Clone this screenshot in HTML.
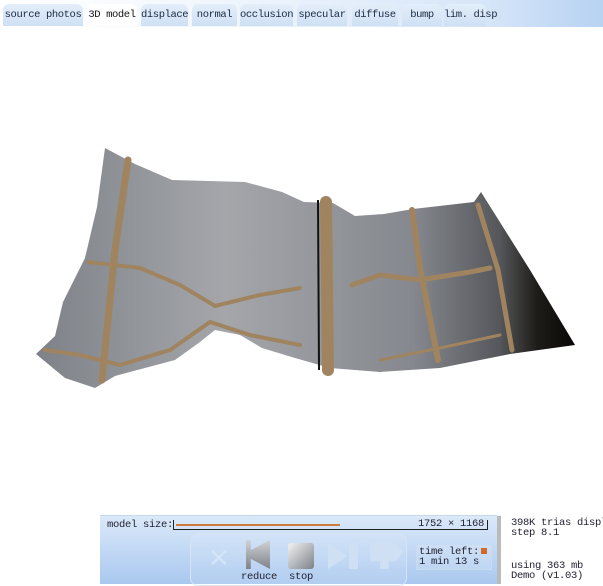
<!DOCTYPE html>
<html><head><meta charset="utf-8"><style>
body{margin:0;width:603px;height:583px;background:#fff;overflow:hidden;position:relative;font-family:"Liberation Mono","DejaVu Sans Mono",monospace;font-size:10.5px;color:#223}
#bar{position:absolute;left:0;top:0;width:603px;height:27px;background:linear-gradient(90deg,#fff 0%,#f4f8fd 30%,#d7e6f8 80%,#b8d2f2 100%)}
.tab{position:absolute;top:4px;height:22px;line-height:22px;text-align:center;background:linear-gradient(#e4eefa,#cfe0f4);border-radius:6px 6px 0 0;color:#1a2a44;font-size:10.5px;white-space:nowrap;letter-spacing:-0.4px}
.tab.on{background:#fff;color:#111}
#panel{position:absolute;left:100px;top:515px;width:397px;height:68px;background:linear-gradient(#dbe9f9,#a9c8ef);border-top:1px solid #c6d8ee}
#panel:after{content:"";position:absolute;right:-4px;top:0;width:4px;height:68px;background:#bbb}
.txt{position:absolute;white-space:pre;line-height:10px;letter-spacing:-0.3px}
</style></head><body>
<div id="bar">
<div class="tab" style="left:3px;width:80px">source photos</div>
<div class="tab on" style="left:87px;width:50px">3D model</div>
<div class="tab" style="left:141px;width:47px">displace</div>
<div class="tab" style="left:192px;width:45px">normal</div>
<div class="tab" style="left:240px;width:53px">occlusion</div>
<div class="tab" style="left:297px;width:50px">specular</div>
<div class="tab" style="left:352px;width:46px">diffuse</div>
<div class="tab" style="left:402px;width:40px">bump</div>
<div class="tab" style="left:444px;width:42px">lim. disp</div>
</div>
<svg style="position:absolute;left:0;top:0" width="603" height="583">
<defs>
<linearGradient id="g" x1="0" x2="1"><stop offset="0" stop-color="#7e8288"/><stop offset="0.35" stop-color="#a4a6aa"/><stop offset="0.7" stop-color="#85888e"/><stop offset="0.86" stop-color="#55575b"/><stop offset="0.93" stop-color="#1e1c18"/><stop offset="1" stop-color="#0a0806"/></linearGradient>
</defs>
<path d="M105,148 L135,164 L172,180 L245,182 L282,192 L304,202 L333,203 L355,216 L384,214 L413,209 L474,202 L481,192 L530,270 L575,345 L510,354 L440,368 L380,372 L330,368 L295,358 L262,348 L240,335 L215,330 L200,342 L175,360 L115,376 L95,388 L65,378 L36,354 L55,336 L63,302 L85,258 L97,207 Z" fill="url(#g)"/>
<g stroke="#a08460" fill="none" stroke-linecap="round">
<path d="M128,160 L115,250 L102,380" stroke-width="7"/>
<path d="M326,202 L328,370" stroke-width="12"/>
<path d="M412,210 L420,268 L438,360" stroke-width="6"/>
<path d="M478,205 L498,270 L512,350" stroke-width="5"/>
<path d="M88,262 L140,268 L180,285 L215,306 L260,295 L300,288" stroke-width="4"/>
<path d="M352,285 L380,275 L420,280 L470,272 L490,268" stroke-width="5"/>
<path d="M380,360 L440,348 L500,335" stroke-width="3"/>
<path d="M45,350 L80,355 L120,365 L170,350 L210,322 L250,335 L300,345" stroke-width="4"/>
</g>
<path d="M318,200 L319,370" stroke="#111" stroke-width="2"/>
</svg>
<div id="panel">
<div class="txt" style="left:7px;top:4px">model size:</div>
<div style="position:absolute;left:73px;top:4px;width:313px;height:9px;border:1px solid #222;border-width:0 1px 1px 1px"></div>
<div style="position:absolute;left:76px;top:8px;width:164px;height:2px;background:#d07a3a"></div>
<div class="txt" style="left:318px;top:3px">1752 × 1168</div>
<div style="position:absolute;left:90px;top:17px;width:215px;height:51px;border:1px solid #d6e4f5;border-radius:8px;background:rgba(255,255,255,0.1)"></div>
<div style="position:absolute;left:108px;top:28px;font-size:26px;color:#d5e4f6;font-family:'DejaVu Sans'">✕</div>
<div style="position:absolute;left:146px;top:24px;width:24px;height:29px;background:linear-gradient(#d0d3d6,#7e8388);clip-path:polygon(0 0,20% 0,20% 35%,100% 0,100% 100%,20% 65%,20% 100%,0 100%)"></div>
<div style="position:absolute;left:188px;top:27px;width:26px;height:26px;border-radius:3px;background:linear-gradient(135deg,#f2f3f4,#7d8186)"></div>
<div style="position:absolute;left:228px;top:27px;width:30px;height:26px;background:#cfe0f5;clip-path:polygon(0 0,65% 50%,0 100%,0 0,70% 0,100% 0,100% 100%,70% 100%,70% 0)"></div>
<div style="position:absolute;left:270px;top:27px;width:34px;height:26px;background:#cfe0f5;clip-path:polygon(0 0,75% 0,100% 35%,75% 70%,55% 70%,55% 100%,30% 100%,30% 70%,0 70%)"></div>
<div class="txt" style="left:141px;top:56px">reduce</div>
<div class="txt" style="left:189px;top:56px">stop</div>
<div style="position:absolute;left:316px;top:28px;width:74px;height:24px;border:1px solid #c8dbf1;background:rgba(255,255,255,0.15)"></div>
<div class="txt" style="left:319px;top:31px">time left:</div>
<div style="position:absolute;left:381px;top:32px;width:6px;height:6px;background:#d06a2a"></div>
<div class="txt" style="left:319px;top:41px">1 min 13 s</div>
</div>
<div class="txt" style="left:511px;top:518px">398K trias displa
step 8.1</div>
<div class="txt" style="left:511px;top:561px">using 363 mb
Demo (v1.03)</div>
</body></html>
